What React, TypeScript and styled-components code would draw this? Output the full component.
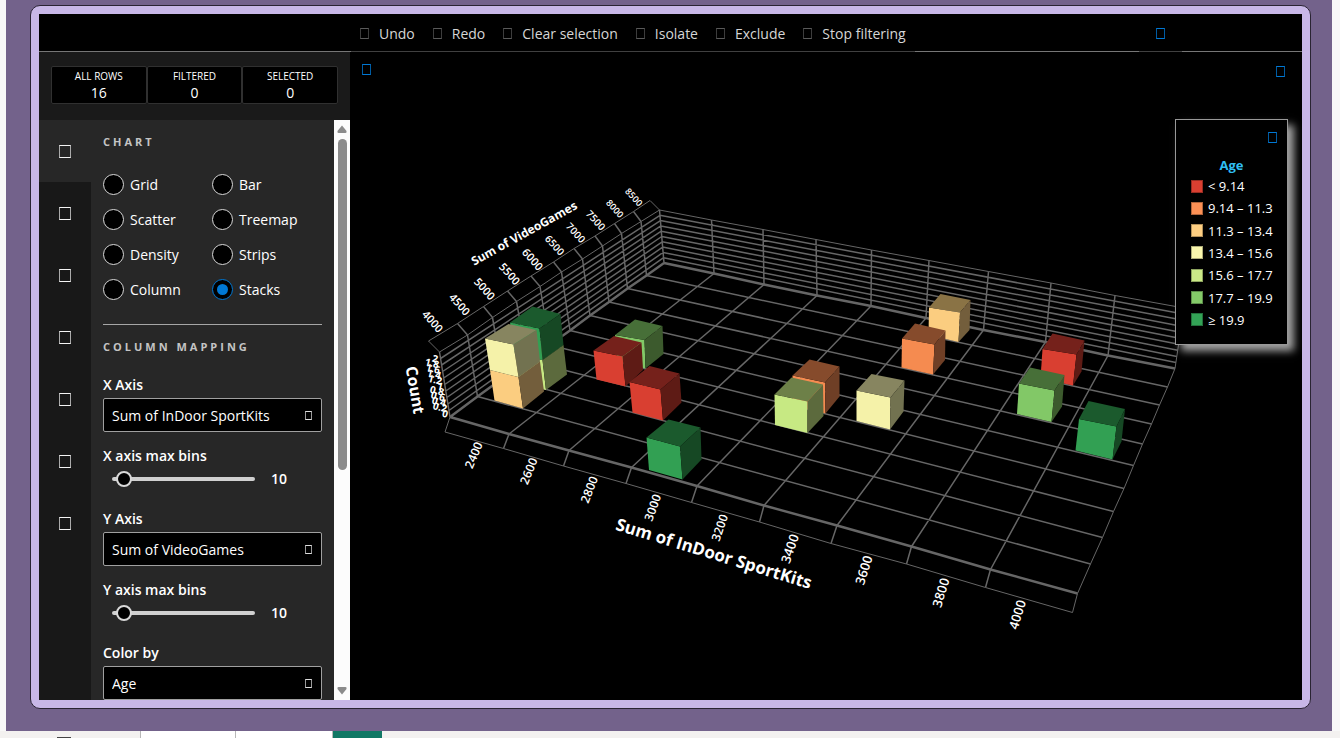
import React, { useState } from "react";
import styled, { createGlobalStyle } from "styled-components";

const sans = `"Open Sans", "Noto Sans", sans-serif`;
const blue = "#0078d4";

const GlobalStyle = createGlobalStyle`
  *, *::before, *::after { box-sizing: border-box; }
  body { margin: 0; background: #f8f8f8; font-family: ${sans}; font-size: 14px; color: #fff; }
  button, input, select { font: inherit; color: inherit; }
`;

const Page = styled.div`
  display: flex;
  flex-direction: column;
  height: 100vh;
  overflow: hidden;
`;

const Report = styled.main`
  flex: 1;
  min-height: 0;
  display: flex;
  margin: 0 8px 0 6px;
  padding: 5px 21px 22px 24px;
  background: #73628b;
`;

const Frame = styled.section`
  flex: 1;
  min-width: 0;
  display: flex;
  padding: 8px;
  background: #c8b7e7;
  border: 1px solid #2a2433;
  border-radius: 10px;
`;

const Visual = styled.div`
  flex: 1;
  min-width: 0;
  display: flex;
  flex-direction: column;
  overflow: hidden;
  background: #000;
`;

const Toolbar = styled.header`
  display: flex;
  height: 38px;
  flex: none;
  padding: 0 120px 0 312px;
  box-shadow: inset 0 -1px #767676;
`;

const ToolButton = styled.button`
  display: flex;
  align-items: center;
  gap: 10px;
  padding: 2px 9px 0;
  border: 0;
  border-bottom: 1px solid #404040;
  background: #000;
  color: #d6d6d6;
  white-space: nowrap;
  cursor: pointer;
`;

const HelpButton = styled(ToolButton)`
  margin-left: auto;
  padding: 2px 17px 0;
`;

type GlyphSize = "small" | "medium" | "large";
const glyphSizes: Record<GlyphSize, [number, number]> = {
  small: [7, 9],
  medium: [9, 11],
  large: [12, 13],
};

const Glyph = styled.span<{ $size?: GlyphSize; $color?: string; $side?: string }>`
  flex: none;
  display: block;
  width: ${(p) => glyphSizes[p.$size ?? "medium"][0]}px;
  height: ${(p) => glyphSizes[p.$size ?? "medium"][1]}px;
  border: 1px solid ${(p) => p.$color ?? "#5a5a5a"};
  border-left-color: ${(p) => p.$side ?? "#3c3c3c"};
  border-right-color: ${(p) => p.$side ?? "#3c3c3c"};
`;

const Body = styled.div`
  flex: 1;
  min-height: 0;
  display: flex;
`;

const Sidebar = styled.aside`
  flex: none;
  width: 311px;
  display: flex;
  flex-direction: column;
  background: #1a1a1a;
`;

const Stats = styled.div`
  display: grid;
  grid-template-columns: repeat(3, 1fr);
  height: 68px;
  flex: none;
  padding: 14px 12px 16px 12px;
`;

const Stat = styled.div`
  display: flex;
  flex-direction: column;
  align-items: center;
  justify-content: center;
  border: 1px solid #303030;
  border-radius: 2px;
  background: #000;
`;

const StatLabel = styled.span`
  font-size: 10px;
  line-height: 16px;
`;

const StatValue = styled.span`
  line-height: 18px;
`;

const Panels = styled.div`
  flex: 1;
  min-height: 0;
  display: flex;
  background: #272727;
`;

const Nav = styled.nav`
  flex: none;
  width: 52px;
  background: #181818;
`;

const NavButton = styled.button<{ $active: boolean }>`
  display: flex;
  align-items: center;
  justify-content: center;
  width: 100%;
  height: 62px;
  padding: 0;
  border: 0;
  background: ${(p) => (p.$active ? "#272727" : "transparent")};
  cursor: pointer;
`;

const Settings = styled.form`
  flex: 1;
  min-width: 0;
  overflow: hidden;
  padding: 12px 12px 0;
`;

const Heading = styled.h2`
  margin: 0;
  font-size: 11px;
  line-height: 20px;
  font-weight: 700;
  letter-spacing: 3px;
  color: #c4c4c4;
`;

const Choices = styled.div`
  display: grid;
  grid-template-columns: 109px 1fr;
  margin: 15px 0 12px;
  padding-bottom: 17px;
  border-bottom: 1px solid #a6a6a6;
`;

const Choice = styled.label`
  display: flex;
  align-items: center;
  gap: 6px;
  height: 35px;
`;

const Radio = styled.input`
  appearance: none;
  display: grid;
  place-items: center;
  width: 21px;
  height: 21px;
  margin: 0;
  border: 1px solid #d8d8d8;
  border-radius: 50%;
  background: #000;
  &:checked { border-color: ${blue}; }
  &:checked::before {
    content: "";
    width: 11px;
    height: 11px;
    border-radius: 50%;
    background: ${blue};
  }
`;

const Label = styled.label`
  display: block;
  line-height: 20px;
  font-weight: 600;
`;

const Field = styled.div`
  padding-top: 18px;
`;

const SelectBox = styled.div`
  display: grid;
  align-items: center;
  margin: 3px 0 14px;
  > * { grid-area: 1 / 1; }
  > span { justify-self: end; margin-right: 10px; pointer-events: none; }
`;

const Select = styled.select`
  appearance: none;
  width: 100%;
  height: 34px;
  padding: 0 28px 0 8px;
  border: 1px solid #a0a0a0;
  border-radius: 2px;
  background: #000;
`;

const SliderRow = styled.div`
  display: flex;
  align-items: center;
  gap: 16px;
  height: 25px;
  padding-left: 9px;
  font-weight: 600;
`;

const Slider = styled.input`
  appearance: none;
  width: 143px;
  height: 4px;
  margin: 0;
  border-radius: 2px;
  background: #d0d0d0;
  &::-webkit-slider-thumb {
    appearance: none;
    width: 16px;
    height: 16px;
    border: 2px solid #d8d8d8;
    border-radius: 50%;
    background: #000;
  }
`;

const Scrollbar = styled.div`
  flex: none;
  width: 16px;
  display: flex;
  flex-direction: column;
  align-items: center;
  padding: 5px 0;
  background: #fcfcfc;
`;

const ScrollTrack = styled.div`
  flex: 1;
  width: 9px;
  padding: 6px 0;
`;

const ScrollThumb = styled.div`
  height: 61%;
  border-radius: 5px;
  background: #8b8b8b;
`;

const Scene = styled.div`
  flex: 1;
  min-width: 0;
  position: relative;
  overflow: hidden;
  background: #000;
`;

const SceneDrawing = styled.svg`
  display: block;
  width: 100%;
  height: 100%;
  font-family: ${sans};
  font-weight: 600;
  fill: #fff;
`;

const CornerButton = styled.button<{ $edge: "left" | "right" }>`
  position: absolute;
  top: ${(p) => (p.$edge === "left" ? 6 : 8)}px;
  ${(p) => p.$edge}: 12px;
  padding: 6px ${(p) => (p.$edge === "left" ? 0 : 5)}px;
  border: 0;
  background: none;
`;

const Legend = styled.section`
  position: absolute;
  top: 67px;
  right: 14px;
  width: 113px;
  height: 226px;
  display: flex;
  flex-direction: column;
  padding: 12px 10px 13px 15px;
  border: 1px solid #999;
  background: #000;
  box-shadow: 6px 6px 8px #a4a4a4;
  font-size: 13px;
  font-weight: 500;
`;

const LegendClose = styled.button`
  align-self: flex-end;
  padding: 0;
  border: 0;
  background: none;
`;

const LegendTitle = styled.h3`
  margin: 12px 5px 0 0;
  font-size: 13px;
  line-height: 20px;
  text-align: center;
  color: #2fbdf2;
`;

const LegendList = styled.ul`
  flex: 1;
  display: flex;
  flex-direction: column;
  margin: 0;
  padding: 0;
  list-style: none;
`;

const LegendItem = styled.li`
  flex: 1;
  display: flex;
  align-items: center;
  gap: 5px;
  white-space: nowrap;
`;

const Swatch = styled.span<{ $color: string }>`
  flex: none;
  width: 12px;
  height: 13px;
  background: ${(p) => p.$color};
  border: 1px solid rgba(0, 0, 0, 0.3);
`;

const SheetTabs = styled.footer`
  flex: none;
  display: flex;
  height: 7px;
  background: #f3f1f0;
`;

const SheetTab = styled.div<{ $width: number; $color: string }>`
  width: ${(p) => p.$width}px;
  border-left: 1px solid #b8b8b8;
  background: ${(p) => p.$color};
`;

const TabSpace = styled.div`
  width: 140px;
  display: flex;
  align-items: flex-end;
  padding-left: 57px;
`;

const TabMark = styled.span`
  width: 14px;
  height: 1px;
  background: #444;
`;

type Point = [number, number];

// Floor edges, from the left corner to the right and from front to back.
const front: Point[] = [[450, 417], [509, 434], [569, 450.5], [631.5, 467.5], [697, 486], [764, 505.5], [837, 525.5], [911.5, 546.5], [990.5, 569.5], [1077.5, 593.5]];
const frontRim: Point[] = [[445, 432], [503.5, 448.5], [563.5, 466], [626, 483.5], [691.5, 502.5], [759.5, 522], [831, 543.5], [906.5, 564], [985.5, 587.5], [1072.5, 612.5]];
const back: Point[] = [[664, 263], [714, 273.5], [764, 284.5], [817, 295.5], [871, 306], [926, 318], [983.5, 330], [1045.5, 342], [1108, 355.5], [1175, 368.5]];
const backTop: Point[] = [[659.5, 210], [711.5, 220], [763, 229.5], [816, 239.5], [871.5, 250], [929, 260.5], [988.5, 271.5], [1051, 283], [1115, 295.5], [1184, 308]];
const left: Point[] = [[450, 417], [477.5, 396.5], [503, 378], [527, 360.5], [549.5, 345], [570, 330.5], [590, 315.5], [609, 302], [627.5, 288.5], [646.5, 275.5], [664, 263]];
const leftTop: Point[] = [[439.5, 352], [467.5, 335], [492.5, 317.5], [516.5, 301.5], [540, 286.5], [561.5, 272], [582.5, 259], [602.5, 246], [621.5, 233.5], [641, 221.5], [659.5, 210]];
const leftRim: Point[] = [[428.5, 341], [457.5, 323.5], [483.5, 306.5], [507.5, 291], [531, 276], [553.5, 262], [574, 248.5], [595, 236], [614.5, 223.5], [633.5, 211.5], [650, 200.5]];
const right: Point[] = [[1077.5, 593.5], [1090.5, 564], [1102.5, 537.5], [1113.5, 511.5], [1124, 488.5], [1133.5, 465.5], [1142.5, 444], [1151.5, 424], [1159.5, 405], [1167.5, 387], [1175, 368.5]];

const mix = (a: Point, b: Point, t: number): Point => [a[0] + (b[0] - a[0]) * t, a[1] + (b[1] - a[1]) * t];
const seg = (a: Point, b: Point) => `M${a[0]} ${a[1]}L${b[0]} ${b[1]}`;
const pairs = (a: Point[], b: Point[]) => a.map((p, i) => seg(p, b[i])).join("");
const run = (a: Point[]) => "M" + a.map((p) => p.join(" ")).join("L");
const levels = Array.from({ length: 9 }, (_, i) => (i + 1) / 10);

const gridLines =
  pairs(front.slice(1, -1), back.slice(1, -1)) +
  pairs(left.slice(1, -1), right.slice(1, -1)) +
  pairs(back.slice(0, -1), backTop.slice(0, -1)) +
  pairs(left.slice(0, -1), leftTop.slice(0, -1)) +
  levels.map((t) => seg(mix(back[0], backTop[0], t), mix(back[9], backTop[9], t)) + seg(mix(left[0], leftTop[0], t), mix(left[10], leftTop[10], t))).join("") +
  pairs(front.slice(1, -1), frontRim.slice(1, -1)) +
  pairs(leftTop.slice(1, -1), leftRim.slice(1, -1));
const heavyLines = run(front) + run(left) + run(back);
const thinLines =
  run(frontRim) + run(leftRim) + run(right) + run(backTop) + run(leftTop) +
  seg(front[0], frontRim[0]) + seg(front[9], frontRim[9]) + seg(leftTop[0], leftRim[0]) + seg(leftTop[10], leftRim[10]) + seg(back[9], backTop[9]);

const tones = {
  red: ["#d93f31", "#75211b", "#5e1b15"],
  orange: ["#f58b50", "#864b2c", "#6f3f26"],
  amber: ["#fbcd80", "#8a7345", "#735e3c"],
  cream: ["#f5f2a9", "#878560", "#727250"],
  lime: ["#c7e983", "#6d8048", "#5c6a3d"],
  green: ["#82c867", "#476f38", "#3c5a2d"],
  forest: ["#32a053", "#1b5a2d", "#164824"],
};

// Corners: top-left front, top-left back, top-right back, top-right front,
// bottom-right front, bottom-left front, bottom-right back.
const cubes: { tone: keyof typeof tones; p: Point[] }[] = [
  { tone: "amber", p: [[929, 307.5], [940.5, 294], [970.5, 300], [960, 312.5], [958.5, 342], [928.5, 335], [969.5, 330]] },
  { tone: "orange", p: [[902, 338.5], [915, 323.5], [945.5, 330.5], [934.5, 344.5], [933, 374.5], [901.5, 367.5], [945, 360]] },
  { tone: "red", p: [[1042.5, 349], [1052.5, 333.5], [1084.5, 340.5], [1076.5, 354.5], [1073, 385.5], [1040.5, 378.5], [1081.5, 371.5]] },
  { tone: "green", p: [[1019, 383.5], [1030, 367.5], [1064.5, 375], [1054.5, 390.5], [1051.5, 422], [1017, 414], [1062, 406.5]] },
  { tone: "forest", p: [[1079, 419], [1088.5, 401], [1125, 409], [1116.5, 426.5], [1112.5, 459.5], [1075.5, 450.5], [1121.5, 441.5]] },
  { tone: "orange", p: [[792.5, 375.5], [809.5, 359.5], [839.5, 366.5], [825, 382.5], [825.5, 413.5], [792.5, 406], [839.5, 396.5]] },
  { tone: "lime", p: [[774.5, 394.5], [791.5, 377.5], [823, 384.5], [807.5, 401.5], [807.5, 433], [775, 425], [823.5, 416]] },
  { tone: "cream", p: [[856.5, 390.5], [871.5, 374], [904.5, 380.5], [890.5, 397.5], [890, 429.5], [856.5, 421], [903.5, 411.5]] },
  { tone: "lime", p: [[516, 355], [538, 340], [563.5, 345], [542.5, 360], [546, 390], [520, 384], [567, 374.5]] },
  { tone: "forest", p: [[510, 322.5], [532.5, 306.5], [560.5, 314], [539.5, 328.5], [542.5, 360], [515, 354], [563.5, 345]] },
  { tone: "amber", p: [[490, 370], [513, 355], [540, 361.5], [518.5, 377], [523, 408.5], [494.5, 400.5], [544, 391.5]] },
  { tone: "cream", p: [[485, 338.5], [508.5, 324], [536.5, 330], [513.5, 344.5], [518.5, 377], [490, 370], [540, 361.5]] },
  { tone: "green", p: [[615, 335], [635, 319.5], [662.5, 326], [644.5, 340], [645.5, 368.5], [617, 362], [663.5, 354]] },
  { tone: "red", p: [[593.5, 350.5], [614, 336], [641.5, 342.5], [622.5, 356.5], [625.5, 386.5], [596.5, 379.5], [643, 370]] },
  { tone: "red", p: [[629.5, 382], [649.5, 366], [679.5, 373.5], [660.5, 389.5], [663, 420.5], [632.5, 412.5], [681.5, 402.5]] },
  { tone: "forest", p: [[646.5, 437.5], [668.5, 419.5], [700.5, 427.5], [680, 446.5], [682.5, 479.5], [649, 470], [701.5, 459.5]] },
];

const poly = (...p: Point[]) => p.map((q) => q.join(",")).join(" ");

type Tick = [string, number, number, number, number];
const ticks: Tick[] = [
  ["2400", 473.5, 455, -67, 12], ["2600", 528.5, 471, -68, 12], ["2800", 589, 489.5, -69, 12],
  ["3000", 652.5, 507.5, -70, 12], ["3200", 719.5, 527.5, -71, 12], ["3400", 789.5, 548.5, -71, 13],
  ["3600", 863.5, 570, -72, 13], ["3800", 940.5, 592.5, -73, 13], ["4000", 1017, 614.5, -73, 13],
  ["4000", 433, 321, 48, 11], ["4500", 460, 304, 48, 11], ["5000", 485, 288.5, 48, 11],
  ["5500", 510, 273.5, 48, 11], ["6000", 533, 259, 48, 11], ["6500", 555, 245, 47, 10],
  ["7000", 576, 232.5, 47, 10], ["7500", 596, 220, 47, 10], ["8000", 615, 208.5, 47, 9],
  ["8500", 634, 197, 47, 9],
];
const countTicks = ["2", "1.8", "1.6", "1.4", "1.2", "1", "0.8", "0.6", "0.4", "0.2", "0"];

function AxisText({ x, y, angle, size, weight, children }: { x: number; y: number; angle: number; size: number; weight?: number; children: string }) {
  return (
    <text x={x} y={y} fontSize={size} fontWeight={weight ?? 600} textAnchor="middle" dominantBaseline="central" transform={`rotate(${angle} ${x} ${y})`}>
      {children}
    </text>
  );
}

function Stacks() {
  return (
    <SceneDrawing viewBox="350 52 952 648" role="img" aria-label="Stacks chart of Sum of InDoor SportKits and Sum of VideoGames">
      <g fill="none" stroke="#666">
        <path d={thinLines} strokeWidth="1" />
        <path d={gridLines} strokeWidth="1.5" />
        <path d={heavyLines} strokeWidth="2.4" />
      </g>
      {cubes.map(({ tone, p }, i) => (
        <g key={i}>
          <polygon points={poly(p[0], p[3], p[4], p[5])} fill={tones[tone][0]} />
          <polygon points={poly(p[0], p[1], p[2], p[3])} fill={tones[tone][1]} />
          <polygon points={poly(p[3], p[2], p[6], p[4])} fill={tones[tone][2]} />
        </g>
      ))}
      {ticks.map(([text, x, y, angle, size]) => (
        <AxisText key={text + x} x={x} y={y} angle={angle} size={size}>{text}</AxisText>
      ))}
      {countTicks.map((text, i) => {
        const x = 438 + i;
        const y = 359 + i * 5.5;
        return (
          <text key={text} x={x} y={y} fontSize="10" fontWeight="700" textAnchor="end" dominantBaseline="central" transform={`rotate(14 ${x} ${y})`}>{text}</text>
        );
      })}
      <AxisText x={415.5} y={390} angle={80} size={16} weight={700}>Count</AxisText>
      <AxisText x={524} y={233} angle={-29} size={12} weight={700}>Sum of VideoGames</AxisText>
      <AxisText x={714} y={553} angle={17} size={17} weight={700}>Sum of InDoor SportKits</AxisText>
    </SceneDrawing>
  );
}

const tools = ["Undo", "Redo", "Clear selection", "Isolate", "Exclude", "Stop filtering"];
const stats = [["ALL ROWS", "16"], ["FILTERED", "0"], ["SELECTED", "0"]];
const sections = ["Chart", "Color", "Data browser", "Search", "Snapshots", "History", "Settings"];
const charts = ["Grid", "Bar", "Scatter", "Treemap", "Density", "Strips", "Column", "Stacks"];
const columns = ["Sum of InDoor SportKits", "Sum of VideoGames", "Age"];
const bins = [
  ["#d93f31", "< 9.14"], ["#fb9055", "9.14 – 11.3"], ["#fecf82", "11.3 – 13.4"], ["#faf7ad", "13.4 – 15.6"],
  ["#cbea87", "15.6 – 17.7"], ["#84cb69", "17.7 – 19.9"], ["#33a356", "≥ 19.9"],
];

function ColumnSelect({ id, label, initial }: { id: string; label: string; initial: string }) {
  return (
    <>
      <Label htmlFor={id}>{label}</Label>
      <SelectBox>
        <Select id={id} defaultValue={initial}>
          {columns.map((c) => <option key={c}>{c}</option>)}
        </Select>
        <Glyph $size="small" $color="#ddd" $side="#999" />
      </SelectBox>
    </>
  );
}

function BinSlider({ id, label }: { id: string; label: string }) {
  const [value, setValue] = useState(10);
  return (
    <>
      <Label htmlFor={id}>{label}</Label>
      <SliderRow>
        <Slider id={id} type="range" min={7} max={100} value={value} onChange={(e) => setValue(Number(e.target.value))} />
        <output htmlFor={id}>{value}</output>
      </SliderRow>
    </>
  );
}

export default function App() {
  const [section, setSection] = useState(0);
  return (
    <Page>
      <GlobalStyle />
      <Report>
        <Frame>
          <Visual>
            <Toolbar>
              {tools.map((t) => <ToolButton key={t} type="button"><Glyph />{t}</ToolButton>)}
              <HelpButton type="button" aria-label="Theme"><Glyph $color={blue} $side="#005ba1" /></HelpButton>
            </Toolbar>
            <Body>
              <Sidebar>
                <Stats>
                  {stats.map(([label, value]) => (
                    <Stat key={label}><StatLabel>{label}</StatLabel><StatValue>{value}</StatValue></Stat>
                  ))}
                </Stats>
                <Panels>
                  <Nav>
                    {sections.map((s, i) => (
                      <NavButton key={s} type="button" aria-label={s} $active={i === section} onClick={() => setSection(i)}>
                        <Glyph $size="large" $color="#f4f4f4" $side="#aaa" />
                      </NavButton>
                    ))}
                  </Nav>
                  <Settings>
                    <Heading>CHART</Heading>
                    <Choices>
                      {charts.map((c) => (
                        <Choice key={c}><Radio type="radio" name="chart" defaultChecked={c === "Stacks"} />{c}</Choice>
                      ))}
                    </Choices>
                    <Heading>COLUMN MAPPING</Heading>
                    <Field>
                      <ColumnSelect id="x-axis" label="X Axis" initial={columns[0]} />
                      <BinSlider id="x-bins" label="X axis max bins" />
                    </Field>
                    <Field>
                      <ColumnSelect id="y-axis" label="Y Axis" initial={columns[1]} />
                      <BinSlider id="y-bins" label="Y axis max bins" />
                    </Field>
                    <Field>
                      <ColumnSelect id="color-by" label="Color by" initial={columns[2]} />
                    </Field>
                  </Settings>
                  <Scrollbar aria-hidden="true">
                    <svg width="10" height="8"><path d="M5 0.5L9.5 6Q10 8 8.500 8H1.500Q0 8 0.500 6Z" fill="#8b8b8b" /></svg>
                    <ScrollTrack><ScrollThumb /></ScrollTrack>
                    <svg width="10" height="8"><path d="M5 7.500L9.500 2Q10 0 8.500 0H1.500Q0 0 0.500 2Z" fill="#8b8b8b" /></svg>
                  </Scrollbar>
                </Panels>
              </Sidebar>
              <Scene>
                <Stacks />
                <CornerButton type="button" aria-label="Camera" $edge="left"><Glyph $color={blue} $side="#005ba1" /></CornerButton>
                <CornerButton type="button" aria-label="Toggle legend" $edge="right"><Glyph $color={blue} $side="#005ba1" /></CornerButton>
                <Legend>
                  <LegendClose type="button" aria-label="Close legend"><Glyph $color={blue} $side="#005ba1" /></LegendClose>
                  <LegendTitle>Age</LegendTitle>
                  <LegendList>
                    {bins.map(([color, text]) => (
                      <LegendItem key={text}><Swatch $color={color} />{text}</LegendItem>
                    ))}
                  </LegendList>
                </Legend>
              </Scene>
            </Body>
          </Visual>
        </Frame>
      </Report>
      <SheetTabs>
        <TabSpace><TabMark /></TabSpace>
        <SheetTab $width={95} $color="#fff" />
        <SheetTab $width={97} $color="#fff" />
        <SheetTab $width={50} $color="#117865" />
      </SheetTabs>
    </Page>
  );
}
